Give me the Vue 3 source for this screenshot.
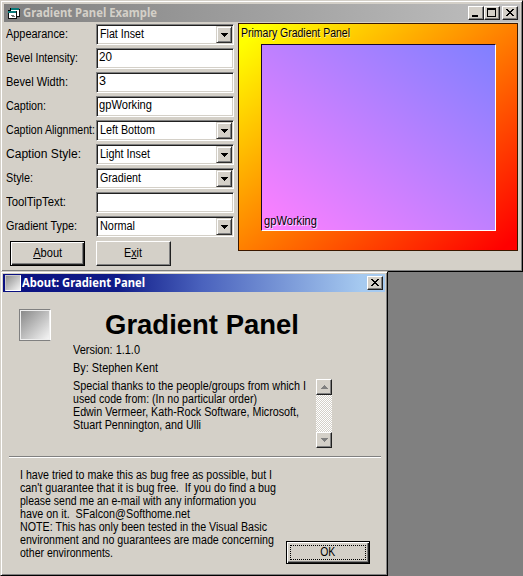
<script setup>
const fields = [
  { label: 'Appearance:', lw: 62, value: 'Flat Inset', vw: 44, combo: true },
  { label: 'Bevel Intensity:', lw: 72, value: '20', vw: 13 },
  { label: 'Bevel Width:', lw: 62, value: '3', vw: 7 },
  { label: 'Caption:', lw: 40, value: 'gpWorking', vw: 53 },
  { label: 'Caption Alignment:', lw: 89, value: 'Left Bottom', vw: 55, combo: true },
  { label: 'Caption Style:', lw: 75, value: 'Light Inset', vw: 50, combo: true },
  { label: 'Style:', lw: 27, value: 'Gradient', vw: 41, combo: true },
  { label: 'ToolTipText:', lw: 60, value: '', vw: 0 },
  { label: 'Gradient Type:', lw: 71, value: 'Normal', vw: 35, combo: true },
]
const thanks = [
  ['Special thanks to the people/groups from which I', 233],
  ['used code from: (In no particular order)', 184],
  ['Edwin Vermeer, Kath-Rock Software, Microsoft,', 226],
  ['Stuart Pennington, and Ulli', 128],
]
const notes = [
  ['I have tried to make this as bug free as possible, but I', 252],
  ["can't guarantee that it is bug free.  If you do find a bug", 256],
  ['please send me an e-mail with any information you', 236],
  ['have on it.  SFalcon@Softhome.net', 170],
  ['NOTE: This has only been tested in the Visual Basic', 247],
  ['environment and no guarantees are made concerning', 254],
  ['other environments.', 93],
]

// Condenses a run of text to the given advance width.
const vFit = {
  mounted(el, { value }) {
    const natural = el.getBoundingClientRect().width
    if (natural && value) el.style.transform = `scaleX(${value / natural})`
  },
}
</script>

<template>
  <div class="desktop">
    <section class="window main">
      <header class="titlebar inactive">
        <svg class="app-icon" width="16" height="16" viewBox="0 0 16 16" shape-rendering="crispEdges">
          <path d="M4 4h9v7h-2v3H3V6h1z" fill="#fff" />
          <path d="M5 3h8v2H5z" fill="#087878" />
          <path d="M4 3h1v3h6v1H4zM2 5h2v1H2z" fill="#000" />
          <path d="M2 6h8v2H2z" fill="#087878" />
          <path d="M2 8h1v6H2zM3 13h8v1H3zM10 6h1v8h-1zM13 4h1v8h-1zM11 11h2v1h-2z" fill="#111" />
          <path d="M5 10h3v1H5zM6 11h3v1H6z" fill="#777" />
        </svg>
        <h1 class="title"><span v-fit="134" class="fit">Gradient Panel Example</span></h1>
        <div class="controls">
          <button class="ctl" aria-label="Minimize">
            <svg width="12" height="10" viewBox="0 0 12 10" shape-rendering="crispEdges"><path d="M2 7h6v2H2z" /></svg>
          </button>
          <button class="ctl" aria-label="Maximize">
            <svg width="12" height="10" viewBox="0 0 12 10" shape-rendering="crispEdges"><path fill-rule="evenodd" d="M1 0h9v9H1zM2 2v6h7V2z" /></svg>
          </button>
          <button class="ctl close" aria-label="Close">
            <svg width="12" height="10" viewBox="0 0 12 10" shape-rendering="crispEdges"><path d="M2 1h2v1h1v1h2V2h1V1h2v1H9v1H8v1H7v1h1v1h1v1h1v1H8V7H7V6H5v1H4v1H2V7h1V6h1V5h1V4H4V3H3V2H2z" /></svg>
          </button>
        </div>
      </header>
      <div class="main-body">
        <div class="form">
          <div v-for="f in fields" :key="f.label" class="row">
            <label class="label"><span v-fit="f.lw" class="fit">{{ f.label }}</span></label>
            <div class="field" :class="{ combo: f.combo }">
              <span v-fit="f.vw" class="fit value">{{ f.value }}</span>
              <span v-if="f.combo" class="drop">
                <svg width="7" height="4" viewBox="0 0 7 4" shape-rendering="crispEdges"><path d="M0 0h7v1H6v1H5v1H4v1H3V3H2V2H1V1H0z" /></svg>
              </span>
            </div>
          </div>
          <div class="actions">
            <button class="btn default"><span v-fit="29" class="fit center"><u>A</u>bout</span></button>
            <button class="btn"><span v-fit="18" class="fit center">E<u>x</u>it</span></button>
          </div>
        </div>
        <div class="panel">
          <div class="panel-caption"><span v-fit="109" class="fit">Primary Gradient Panel</span></div>
          <div class="working"><span v-fit="53" class="fit">gpWorking</span></div>
        </div>
      </div>
    </section>

    <section class="window about">
      <header class="titlebar active">
        <span class="mini-swatch"></span>
        <h2 class="title"><span v-fit="123" class="fit">About: Gradient Panel</span></h2>
        <div class="controls">
          <button class="ctl close" aria-label="Close">
            <svg width="12" height="10" viewBox="0 0 12 10" shape-rendering="crispEdges"><path d="M2 1h2v1h1v1h2V2h1V1h2v1H9v1H8v1H7v1h1v1h1v1h1v1H8V7H7V6H5v1H4v1H2V7h1V6h1V5h1V4H4V3H3V2H2z" /></svg>
          </button>
        </div>
      </header>
      <div class="intro">
        <span class="swatch"></span>
        <div class="info">
          <div class="product"><span v-fit="194" class="fit">Gradient Panel</span></div>
          <p class="line version"><span v-fit="67" class="fit">Version: 1.1.0</span></p>
          <p class="line author"><span v-fit="85" class="fit">By: Stephen Kent</span></p>
          <div class="credits">
            <div class="credit-text">
              <p v-for="[t, w] in thanks" :key="t" class="line"><span v-fit="w" class="fit">{{ t }}</span></p>
            </div>
            <div class="scrollbar">
              <span class="scroll-btn"><svg width="7" height="4" viewBox="0 0 7 4" shape-rendering="crispEdges"><path fill="#808080" d="M3 0h1v1h1v1h1v1h1v1H0V3h1V2h1V1h1z" /></svg></span>
              <span class="scroll-btn"><svg width="7" height="4" viewBox="0 0 7 4" shape-rendering="crispEdges"><path fill="#808080" d="M0 0h7v1H6v1H5v1H4v1H3V3H2V2H1V1H0z" /></svg></span>
            </div>
          </div>
        </div>
      </div>
      <div class="rule"></div>
      <div class="footer">
        <div class="notes">
          <p v-for="[t, w] in notes" :key="t" class="line"><span v-fit="w" class="fit">{{ t }}</span></p>
        </div>
        <button class="btn default ok"><span class="focus"><span v-fit="15" class="fit center">OK</span></span></button>
      </div>
    </section>
  </div>
</template>

<style>
body { background: #808080; overflow: hidden; }
</style>

<style scoped>
* { box-sizing: border-box; margin: 0; padding: 0; }
.desktop {
  width: 523px; height: 576px; overflow: hidden; background: #808080;
  font: 12px/13px "Liberation Sans", Arial, sans-serif; color: #000;
}
.fit { display: inline-block; white-space: pre; transform-origin: left center; }
.fit.center { transform-origin: center; }
.window {
  background: #d4d0c8; border: 1px solid; border-color: #d4d0c8 #000 #000 #d4d0c8;
  box-shadow: inset 1px 1px #fff, inset -1px -1px #808080;
}
.main { width: 523px; height: 272px; padding: 3px 2px 0 3px; }
.about { width: 388px; height: 305px; margin-top: -1px; padding: 2px; }
.titlebar { display: flex; align-items: center; height: 18px; }
.inactive { background: linear-gradient(90deg, #808080, #c0c0c0); color: #d4d0c8; }
.active { background: linear-gradient(90deg, #0a1080 0%, #101c88 30%, #4a62bd 52%, #a6caf0 94%); color: #fff; }
.app-icon { margin-left: 2px; }
.title { flex: 1; padding-left: 1px; font: bold 12px/14px "Noto Sans", Tahoma, sans-serif; }
.controls { display: flex; padding-right: 2px; }
.ctl {
  display: flex; width: 16px; height: 14px; padding: 1px 0 0 1px; border: 1px solid;
  border-color: #fff #202020 #202020 #fff; background: #d4d0c8; box-shadow: inset -1px -1px #808080;
}
.inactive .close { margin-left: 2px; }
.main-body { display: flex; }
.form { width: 234px; padding: 2px 0 0 2px; }
.row { display: flex; height: 24px; }
.label { width: 90px; padding-top: 4px; }
.field {
  display: flex; justify-content: space-between; width: 138px; height: 21px; padding: 0 0 0 2px; background: #fff;
  border: 1px solid; border-color: #808080 #fff #fff #808080;
  box-shadow: inset 1px 1px #202020, inset -1px -1px #d4d0c8;
}
.value { margin-top: 2px; }
.combo .value { margin-top: 3px; }
.combo { padding-left: 3px; }
.drop {
  display: flex; align-items: center; justify-content: center; width: 16px; height: 17px; margin: 1px;
  background: #d4d0c8; border: 1px solid; border-color: #d4d0c8 #303030 #303030 #d4d0c8;
  box-shadow: inset 1px 1px #fff, inset -1px -1px #808080;
}
.actions { display: flex; gap: 11px; padding: 1px 0 0 4px; }
.btn {
  display: flex; align-items: center; justify-content: center; width: 75px; height: 25px; background: #d4d0c8;
  font: inherit; border: 1px solid; border-color: #fff #202020 #202020 #fff; box-shadow: inset -1px -1px #808080;
}
.btn.default { border-color: #000; box-shadow: inset 1px 1px #fff, inset -1px -1px #202020, inset -2px -2px #808080; }
.panel {
  width: 280px; height: 228px; margin-top: 1px; border: 1px solid #3a1800;
  background: linear-gradient(to bottom right, #ff0 5%, #ff8000 50%, #f00 97%);
}
.panel-caption { height: 20px; padding: 3px 0 0 2px; text-shadow: 1px 1px #ffe9a0; }
.working {
  display: flex; align-items: flex-end; width: 235px; height: 187px; margin-left: 22px; padding: 0 0 2px 2px;
  border: 1px solid; border-color: #180828 #fff #fff #180828;
  background: linear-gradient(to top right, #ff80ff, #8080ff); text-shadow: 1px 1px #ffe0ff;
}
.mini-swatch { width: 16px; height: 16px; margin-left: 2px; border: 1px solid; border-color: #c8c8c8 #fff #fff #c8c8c8; background: linear-gradient(135deg, #909090, #f4f4f4); }
.intro { display: flex; height: 164px; padding-left: 16px; }
.swatch {
  width: 32px; height: 32px; margin: 17px 22px 0 0; border: 1px solid; border-color: #808080 #fff #808080 #808080;
  background: linear-gradient(135deg, #858585, #f8f8f8); box-shadow: inset 0 0 0 1px #eee;
}
.product { padding: 18px 0 0 32px; font: bold 27px/30px "Liberation Sans", Arial, sans-serif; }
.line { height: 13px; }
.version { margin-top: 4px; }
.author { margin-top: 5px; }
.credits { display: flex; padding-top: 4px; }
.credit-text { width: 243px; padding-top: 1px; }
.scrollbar {
  display: flex; flex-direction: column; justify-content: space-between; width: 16px; height: 69px;
  background: repeating-conic-gradient(#fff 0 25%, #d4d0c8 0 50%) 0 0 / 2px 2px;
}
.scroll-btn {
  display: flex; align-items: center; justify-content: center; width: 16px; height: 16px; background: #d4d0c8;
  border: 1px solid; border-color: #fff #202020 #202020 #fff; box-shadow: inset -1px -1px #808080;
}
.rule { height: 2px; margin: 0 4px 0 6px; border-top: 1px solid #808080; border-bottom: 1px solid #fff; }
.footer { display: flex; padding: 11px 0 0 17px; }
.notes { width: 266px; }
.ok { width: 84px; height: 23px; margin-top: 72px; }
.focus { display: flex; align-items: center; justify-content: center; width: 76px; height: 15px; border: 1px dotted #000; }
</style>
